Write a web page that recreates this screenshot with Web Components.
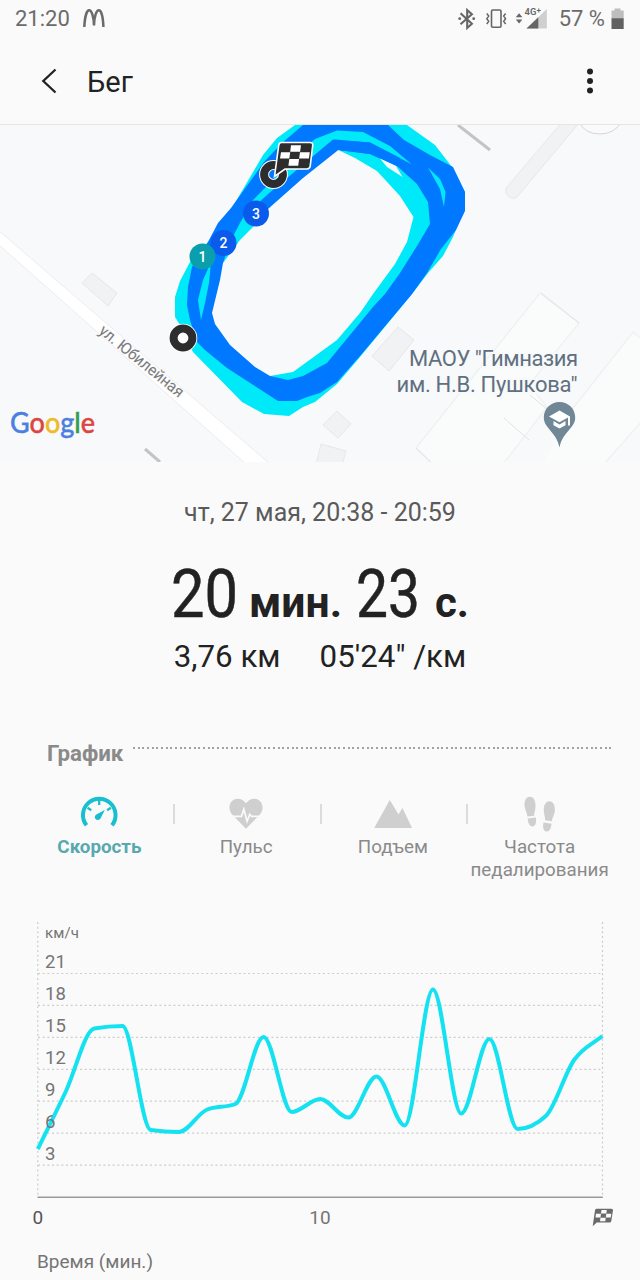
<!DOCTYPE html>
<html lang="ru">
<head>
<meta charset="UTF-8">
<meta name="viewport" content="width=device-width, initial-scale=1.0">
<title>Бег</title>
<style>
  * {
    box-sizing: border-box;
  }
  body {
    margin: 0;
    width: 640px;
    height: 1280px;
    overflow: hidden;
    background: #fafafa;
    font-family: Roboto, "Noto Sans", sans-serif;
    --text-color: #222;
    --muted-color: #8a8a8a;
    --accent-color: #17bfd0;
  }
</style>
</head>
<body>
<workout-page></workout-page>

<script>
class StatusBar extends HTMLElement {

  constructor () {
    super()
    this.shadow = this.attachShadow({ mode: 'open' })
  }

  connectedCallback () {
    this.render()
  }

  render () {
    this.shadow.innerHTML =
    /*html*/`
    <style>
      :host {
        display: flex;
        justify-content: space-between;
        height: 38px;
        padding: 0 15px 0 15px;
        color: #6b6b6b;
        font-size: 22px;
        line-height: 38px;
      }
      .side {
        display: flex;
        align-items: flex-start;
      }
      .left {
        gap: 11px;
      }
      svg {
        display: block;
      }
    </style>
    <div class="side left">
      <span>21:20</span>
      <svg width="26" height="38" viewBox="81 0 26 38" fill="none" stroke="#6b6b6b" stroke-width="2.5"><path d="M84.3 27C84.8 16 87 10.300 89.200 10.300S93.800 16 94 25.500C94.200 16 96.500 10.300 98.800 10.300S103 16 103.400 27"/></svg>
    </div>
    <div class="side">
      <svg width="98" height="38" viewBox="456 0 98 38" fill="#666">
        <path d="M460.500 13.200l11.400 10.600-4.700 4.200V10l4.700 4.200-11.400 10" fill="none" stroke="#666" stroke-width="2.100"/>
        <circle cx="459.700" cy="18.700" r="1.400"/><circle cx="473.700" cy="18.700" r="1.400"/>
        <rect x="491.500" y="10" width="9.500" height="17.300" rx="1.200" fill="none" stroke="#666" stroke-width="1.600"/>
        <path d="M486.800 13.500l1.900 2.600-1.900 2.600 1.900 2.600-1.900 2.700M505.600 13.500l-1.900 2.600 1.900 2.600-1.900 2.600 1.900 2.700" fill="none" stroke="#666" stroke-width="1.500"/>
        <path d="M515.800 17.300l3.300-4 3.300 4zM515.800 19.600l3.300 4 3.300-4z"/>
        <path d="M526.500 28.500L546.800 9v19.500z" fill="#cfcfcf"/>
        <path d="M526.500 28.500l11.800-11.300v11.300z"/>
        <text x="524.500" y="15.400" font-size="9.500" font-weight="600" stroke="#fafafa" stroke-width="2" paint-order="stroke">4G<tspan dy="-2" font-size="8">+</tspan></text>
      </svg>
      <span style="margin-left: 5px">57 %</span>
      <svg width="20" height="38" viewBox="605 0 20 38">
        <path d="M611.500 10.500h3V8.500h6v2h3.200V19h-12.200z" fill="#bdbdbd"/>
        <path d="M611.500 18.300h12.200V29h-12.200z" fill="#616161"/>
      </svg>
    </div>
    `
  }
}
customElements.define('status-bar', StatusBar)


class AppHeader extends HTMLElement {

  constructor () {
    super()
    this.shadow = this.attachShadow({ mode: 'open' })
  }

  connectedCallback () {
    this.render()
  }

  render () {
    this.shadow.innerHTML =
    /*html*/`
    <style>
      :host {
        box-sizing: border-box;
        display: flex;
        align-items: center;
        height: 87px;
        padding: 0 40px 0 40px;
        border-bottom: 1px solid #e4e5e6;
        color: var(--text-color);
        font-size: 29px;
      }
      .title {
        flex: 1;
        margin-left: 27px;
        padding-top: 2px;
      }
      svg {
        display: block;
      }
    </style>
    <svg width="20" height="28" viewBox="0 0 20 28"><path d="M15.500 2.500L3.300 14l12.200 11.500" fill="none" stroke="#222" stroke-width="2.300"/></svg>
    <div class="title"><slot></slot></div>
    <svg width="20" height="28" viewBox="0 0 20 28" fill="#222"><circle cx="10" cy="4.600" r="3"/><circle cx="10" cy="14" r="3"/><circle cx="10" cy="23.500" r="3"/></svg>
    `
  }
}
customElements.define('app-header', AppHeader)


class RouteMap extends HTMLElement {

  constructor () {
    super()
    this.shadow = this.attachShadow({ mode: 'open' })
  }

  connectedCallback () {
    this.render()
  }

  lap (x, y, color, number) {
    return `
      <circle cx="${x}" cy="${y}" r="13" fill="${color}"/>
      <text x="${x}" y="${y + 5}" fill="#fff" font-size="14" font-weight="500" text-anchor="middle">${number}</text>`
  }

  render () {
    this.shadow.innerHTML =
    /*html*/`
    <style>
      :host {
        display: block;
        height: 337px;
      }
      svg {
        display: block;
      }
    </style>
    <svg width="640" height="337" viewBox="0 125 640 337">
      <rect y="125" width="640" height="337" fill="#f8f9fb"/>

      <!-- streets and buildings -->
      <path d="M-2 230L270 464H246L-2 244z" fill="#fff" stroke="#ebecee" stroke-width="1"/>
      <g fill="#f1f2f4" stroke="#e6e7e9" stroke-width="1">
        <path d="M92 273l25 20-9 13-26-23z"/>
        <path d="M398 327l16 13-25 31-17-15z"/>
        <path d="M337 411l14 13-13 14-15-13z"/>
        <path d="M321 444l25 7-4 14h-26z"/>
        <path d="M562 122L507 187q-3 5 1 9t9 1L580 122z"/>
      </g>
      <g fill="#fafbfb" stroke="#f0f1f2" stroke-width="1.500">
        <path d="M433 465L416 448l124-155 39 30-50 62 18 22-46 60"/>
        <path d="M570 412l63-80 10 8v80l-40 45h-60"/>
      </g>
      <path d="M541 293l38 30M530 395l17 14M504 418l25 22M416 448l15 14" fill="none" stroke="#e2e3e5"/>
      <path d="M579 122q6 12 21 12t22-13" fill="#fafafa" stroke="#d5d6d8"/>
      <path d="M458 125l32 25M145 449l15 13" fill="none" stroke="#c3c4c4" stroke-width="3"/>

      <!-- track: slow laps, fast laps, then the gaps between them -->
      <path fill="#00e9f9" d="M295 125L277 138 263 155 232 208 208 242 190 262 180 281 175 297V317L180 325 193 352 242 402 264 414 289 416 303 407 315 402 337 384 360 357 412 294 428 273 443 256 453 237 464 210 465 192 452 167 435 145 407 125z"/>
      <path fill="#0078ff" d="M303 125L282 143 264 162 231 208 218 223 208 242 192 267 188 287 187 305 190 320 197 342 205 350 227 368 278 401 297 401 307 397 320 393 337 382 360 356 412 294 427 273 441 249 456 230 465 211 465 192 453 167 430 155 404 140 388 125z"/>
      <g fill="#00e9f9">
        <path d="M337 130.500L315 139 302 150 270 183 253 200 240 223 230 242 223 263 240 245 262 218 252 209 268 194 333 139.500 340 140.500 370 142.500 412 164.500 390 146 363 132z"/>
        <path d="M338 150L370 154 397 166 417 184 428 202 430 224 417 246 400 273 385 294 373 307 327 363 303 376 288 380 270 376z"/>
        <path d="M428 167.500L440 179 445.500 192 444 207 440 189z"/>
        <path d="M211 262L203 280 198 300 201 320 205 303 209 283z"/>
      </g>
      <path fill="#0078ff" d="M335 139.500L370 142.500 400 158 397 166 370 154 338 150 268 209 252 210z"/>
      <path fill="#f8f9fb" d="M338.300 150L355 158 377 171 400 196 413.500 217 407 242 395 264 373 294 360 313 337 340 293 372 270 376 255 367 230 345 215 324 212 313 220 280 223 263 240 240 260 220 268 209 303 178z"/>
      <path fill="#f8f9fb" d="M380 158.500L396 166 402.500 177 387 167z"/>

      <!-- start -->
      <circle cx="183" cy="338" r="14.300" fill="#fff"/>
      <circle cx="183" cy="338" r="9.400" fill="#fff" stroke="#2d2d2d" stroke-width="8"/>
      ${this.lap(256, 213.500, '#0a5bec', 3)}
      ${this.lap(223.500, 243, '#0a5bec', 2)}
      ${this.lap(202.500, 256.500, '#0b9fae', 1)}

      <!-- finish -->
      <circle cx="273.500" cy="174.500" r="9.400" fill="none" stroke="#fff" stroke-width="10"/>
      <circle cx="273.500" cy="174.500" r="9.400" fill="none" stroke="#2d2d2d" stroke-width="8"/>
      <path d="M281.500 142.500h28.500q3.200 0 2.700 3.200l-2.500 20.500q-.500 2.800-3.200 2.800H285l-10.500 7.500 4.200-31q.300-3 2.800-3z" fill="#2d2d2d" stroke="#fff" stroke-width="1.600"/>
      <path d="M291 145.300h10l-.900 6.400h-9.900zM281 152.200h9.200l-.900 6.300H280zM300 152.200h9.800l-.9 6.300h-9.800zM289.300 159h9.800l-.9 6.700h-9.800z" fill="#fff"/>

      <!-- captions -->
      <g fill="#607080" font-size="22" stroke="#f8f9fb" stroke-width="3" paint-order="stroke">
        <text x="409" y="366" textLength="169">МАОУ "Гимназия</text>
        <text x="396.500" y="391.500" textLength="181">им. Н.В. Пушкова"</text>
      </g>
      <text transform="translate(98 332.500) rotate(39.200)" fill="#7b7b7b" font-size="16" textLength="104" lengthAdjust="spacingAndGlyphs" stroke="#fafafb" stroke-width="2" paint-order="stroke">ул. Юбилейная</text>
      <path d="M559.500 402c-9 0-15.700 7-15.700 15.500 0 11 12.500 14 15.700 30 3.200-16 15.700-19 15.700-30 0-8.500-6.700-15.500-15.700-15.500z" fill="#6f8796"/>
      <path d="M549 416.500l10.500-6 10.500 6v9h-2v-8l-8.500 4.700zM553.500 421v4.200l6 3.300 6-3.300V421l-6 3.400z" fill="#fff"/>
      <text x="10" y="433" font-family="Lato, sans-serif" font-size="28" font-weight="500" textLength="85" lengthAdjust="spacingAndGlyphs" stroke-width=".4"><tspan fill="#4a80e0" stroke="#4a80e0">G</tspan><tspan fill="#dc4540" stroke="#dc4540">o</tspan><tspan fill="#eebb25" stroke="#eebb25">o</tspan><tspan fill="#4a80e0" stroke="#4a80e0">g</tspan><tspan fill="#359c50" stroke="#359c50">l</tspan><tspan fill="#dc4540" stroke="#dc4540">e</tspan></text>
    </svg>
    `
  }
}
customElements.define('route-map', RouteMap)


class WorkoutSummary extends HTMLElement {

  constructor () {
    super()
    this.shadow = this.attachShadow({ mode: 'open' })
  }

  connectedCallback () {
    this.render()
  }

  render () {
    this.shadow.innerHTML =
    /*html*/`
    <style>
      :host {
        display: flex;
        flex-direction: column;
        align-items: center;
        height: 274px;
        padding-top: 32px;
        box-sizing: border-box;
        color: var(--text-color);
      }
      .date {
        height: 38px;
        line-height: 38px;
        color: #5a5a5a;
        font-size: 25px;
      }
      .duration {
        display: block;
        flex: none;
        margin-top: 16px;
      }
      .stats {
        display: flex;
        gap: 39px;
        font-size: 31.300px;
        line-height: 40px;
      }
    </style>
    <div class="date"><slot name="date"></slot></div>
    <svg class="duration" width="320" height="89" viewBox="160 548 320 89" fill="#222">
      <g font-size="66" stroke="#222" stroke-width=".5">
        <text x="171" y="617" textLength="67" lengthAdjust="spacingAndGlyphs">20</text>
        <text x="356" y="617" textLength="64" lengthAdjust="spacingAndGlyphs">23</text>
      </g>
      <g font-size="43" font-weight="700">
        <text x="249" y="617" textLength="93" lengthAdjust="spacingAndGlyphs">мин.</text>
        <text x="435" y="617" textLength="34" lengthAdjust="spacingAndGlyphs">с.</text>
      </g>
    </svg>
    <div class="stats">
      <slot name="distance"></slot>
      <slot name="pace"></slot>
    </div>
    `
  }
}
customElements.define('workout-summary', WorkoutSummary)


class SectionTitle extends HTMLElement {

  constructor () {
    super()
    this.shadow = this.attachShadow({ mode: 'open' })
  }

  connectedCallback () {
    this.render()
  }

  render () {
    this.shadow.innerHTML =
    /*html*/`
    <style>
      :host {
        box-sizing: border-box;
        display: flex;
        align-items: flex-start;
        gap: 10px;
        height: 57px;
        padding: 0 28px 0 47px;
        color: var(--muted-color);
        font-size: 22.300px;
        font-weight: 700;
        line-height: 35px;
      }
      .dots {
        flex: 1;
        height: 2px;
        margin-top: 11px;
        background: repeating-linear-gradient(90deg, #a2a2a2 0 2px, transparent 2px 4.670px);
      }
    </style>
    <slot></slot>
    <div class="dots"></div>
    `
  }
}
customElements.define('section-title', SectionTitle)


class ChartTab extends HTMLElement {

  constructor () {
    super()
    this.shadow = this.attachShadow({ mode: 'open' })
  }

  connectedCallback () {
    this.render()
  }

  // every icon is drawn in a 40x40 box
  icon (name) {
    const icons = {
      speed: `
        <g fill="none" stroke="#17bfd0">
          <path d="M7.500 33.200A16.300 16.300 0 1 1 33 33.200" stroke-width="4"/>
          <path d="M20.200 8v5M8.500 15.800l3.800 2.400M31.900 15.800l-3.800 2.400" stroke-width="2.300"/>
        </g>
        <path d="M25.800 18L21.500 26.500a3 3 0 1 1-3.700-4.200z" fill="#17bfd0"/>`,
      pulse: `
        <path d="M20 36.700L5.700 22C1 16 4 7 11.500 6.700c4 0 6.500 1.800 8.500 4.500 2-2.700 4.500-4.500 8.500-4.500C36 7 39 16 34.300 22z" fill="#cfcfcf"/>
        <path d="M4 24.300h11.500l2.300-7 3.300 12 2.700-7 1.700 2h11" fill="none" stroke="#fafafa" stroke-width="1.700"/>`,
      climb: '<path d="M1.200 36L16.800 8l8.700 14.500 4-6.500L39 36z" fill="#cfcfcf"/>',
      cadence: `
        <g fill="#cfcfcf">
          <path d="M10 4.700c4 0 5.800 5 5.500 10-.2 4-1.500 6-1.300 9l-6.700.8C7 20 4.500 17.500 4.500 13c0-5 2-8.300 5.500-8.300zM7.700 26.500l8-1c1 4.500 0 9-3.200 9s-4.600-4-4.800-8z"/>
          <path d="M29.500 9.300c-4 0-6 4.500-5.700 9.500.2 4 1.500 6 1.300 9.500l6.800 1c.4-4.500 3-6.500 3-11 0-5.500-1.900-9-5.400-9zM23.500 30.500l8 1.200c-.4 4.500-1.800 7.700-4.800 7.700-3.500 0-4.200-4.500-3.200-8.900z"/>
        </g>`
    }
    return icons[name]
  }

  render () {
    this.shadow.innerHTML =
    /*html*/`
    <style>
      :host {
        box-sizing: border-box;
        display: flex;
        flex: 1 1 0;
        flex-direction: column;
        align-items: center;
        color: var(--muted-color);
        font-size: 18.800px;
        line-height: 22.500px;
        text-align: center;
      }
      :host([active]) {
        color: #58a9ad;
        font-weight: 700;
      }
      svg {
        display: block;
        margin-bottom: 3px;
        flex: none;
      }
    </style>
    <svg width="40" height="40" viewBox="0 1 40 40">${this.icon(this.getAttribute('icon'))}</svg>
    <slot></slot>
    `
  }
}
customElements.define('chart-tab', ChartTab)


class ChartTabs extends HTMLElement {

  constructor () {
    super()
    this.shadow = this.attachShadow({ mode: 'open' })
  }

  connectedCallback () {
    this.render()
  }

  render () {
    this.shadow.innerHTML =
    /*html*/`
    <style>
      :host {
        box-sizing: border-box;
        display: flex;
        height: 117px;
        margin: 0 27px 0 26px;
      }
      ::slotted(chart-tab:not(:first-child)) {
        background: linear-gradient(#dcdcdc, #dcdcdc) 0 11px / 2px 20px no-repeat;
      }
    </style>
    <slot></slot>
    `
  }
}
customElements.define('chart-tabs', ChartTabs)


class SpeedChart extends HTMLElement {

  constructor () {
    super()
    this.shadow = this.attachShadow({ mode: 'open' })
    this.points = [1149, 1091, 1028.500, 1026, 1130, 1132, 1109.500, 1104, 1037, 1112, 1099, 1117.500, 1076.500, 1125.500, 989.500, 1113.500, 1039, 1129, 1116, 1060, 1036]
  }

  connectedCallback () {
    this.render()
  }

  // monotone cubic: no overshoot at the peaks
  curve () {
    const p = this.points
    const step = 564.500 / (p.length - 1)
    const d = p.slice(1).map((y, i) => y - p[i])
    const m = p.map((_, i) => {
      if (i === 0) return d[0]
      if (i === p.length - 1) return d[i - 1]
      if (d[i - 1] * d[i] <= 0) return 0
      return Math.sign(d[i]) * Math.min(Math.abs(d[i - 1]) * 2, Math.abs(d[i]) * 2, Math.abs(d[i - 1] + d[i]) / 2)
    })
    let path = `M37.800 ${p[0]}`
    for (let i = 1; i < p.length; i++) {
      const x0 = 37.800 + step * (i - 1)
      const x1 = x0 + step
      path += `C${x0 + step / 3} ${p[i - 1] + m[i - 1] / 3} ${x1 - step / 3} ${p[i] - m[i] / 3} ${x1} ${p[i]}`
    }
    return path
  }

  render () {
    const rows = [21, 18, 15, 12, 9, 6, 3]
    const grid = rows.map((v, i) => `<path d="M38 ${973.500 + i * 31.930}H602"/>`).join('')
    const labels = rows.map((v, i) => `<text x="45" y="${968 + i * 32}">${v}</text>`).join('')

    this.shadow.innerHTML =
    /*html*/`
    <style>
      :host {
        display: block;
        height: 370px;
      }
      svg {
        display: block;
      }
    </style>
    <svg width="640" height="370" viewBox="0 910 640 370">
      <g fill="none" stroke="#cccccc" stroke-width="1.200" stroke-dasharray="2 2.670">
        ${grid}
        <path d="M37.800 922V1197M602.500 922V1197"/>
      </g>
      <path d="M37.500 1197.300H602.800" stroke="#999" stroke-width="1.500"/>
      <path d="${this.curve()}" fill="none" stroke="#14e2f0" stroke-width="4" stroke-linejoin="round"/>
      <g fill="#757575" font-size="19">
        <text x="45" y="938" font-size="15" textLength="34">км/ч</text>
        <g font-size="18.500">${labels}</g>
        <text x="37.800" y="1224" text-anchor="middle" fill="#555">0</text>
        <text x="320" y="1224" text-anchor="middle">10</text>
        <text x="37" y="1267.500" textLength="116">Время (мин.)</text>
      </g>
      <path d="M596.500 1208.700h15q1.700 0 1.500 1.600l-1.700 10.700q-.3 1.500-1.800 1.500h-12.800l-4 3.700 2.300-16q.2-1.500 1.500-1.500z" fill="#6a6a6a"/>
      <path d="M601.500 1210h5.300l-.5 3.600H601zM596 1213.800h5l-.5 3.700h-5zM606.300 1213.800h5l-.5 3.700h-5zM600.500 1217.700h5.200l-.4 3.500H600z" fill="#fafafa"/>
    </svg>
    `
  }
}
customElements.define('speed-chart', SpeedChart)


class WorkoutPage extends HTMLElement {

  constructor () {
    super()
    this.shadow = this.attachShadow({ mode: 'open' })
  }

  connectedCallback () {
    this.render()
  }

  render () {
    this.shadow.innerHTML =
    /*html*/`
    <style>
      :host {
        display: flex;
        flex-direction: column;
        width: 640px;
        height: 1280px;
      }
    </style>
    <status-bar></status-bar>
    <app-header>Бег</app-header>
    <route-map></route-map>
    <workout-summary>
      <span slot="date">чт, 27 мая, 20:38 - 20:59</span>
      <span slot="distance">3,76 км</span>
      <span slot="pace">05'24" /км</span>
    </workout-summary>
    <section-title>График</section-title>
    <chart-tabs>
      <chart-tab icon="speed" active>Скорость</chart-tab>
      <chart-tab icon="pulse">Пульс</chart-tab>
      <chart-tab icon="climb">Подъем</chart-tab>
      <chart-tab icon="cadence">Частота<br>педалирования</chart-tab>
    </chart-tabs>
    <speed-chart></speed-chart>
    `
  }
}
customElements.define('workout-page', WorkoutPage)
</script>
</body>
</html>
